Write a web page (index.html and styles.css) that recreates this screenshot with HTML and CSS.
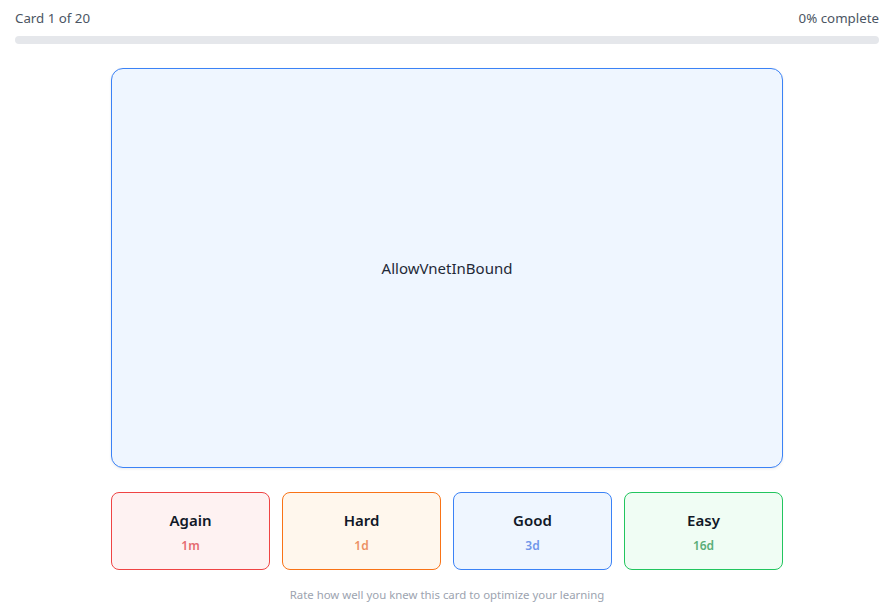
FILE: index.html
```html
<!DOCTYPE html>
<html lang="en">
<head>
    <meta charset="UTF-8">
    <meta name="viewport" content="width=device-width, initial-scale=1.0">
    <title>Flashcards</title>
    <link rel="stylesheet" href="styles.css">
</head>
<body>
    <div class="page">
        <div class="progress-info">
            <span>Card 1 of 20</span>
            <span>0% complete</span>
        </div>
        <div class="progress-track">
            <div class="progress-fill" style="width: 0%"></div>
        </div>

        <div class="card">
            <div class="card-text">AllowVnetInBound</div>
        </div>

        <div class="ratings">
            <button class="rate again">
                <span class="rate-label">Again</span>
                <span class="rate-time">1m</span>
            </button>
            <button class="rate hard">
                <span class="rate-label">Hard</span>
                <span class="rate-time">1d</span>
            </button>
            <button class="rate good">
                <span class="rate-label">Good</span>
                <span class="rate-time">3d</span>
            </button>
            <button class="rate easy">
                <span class="rate-label">Easy</span>
                <span class="rate-time">16d</span>
            </button>
        </div>

        <p class="hint">Rate how well you knew this card to optimize your learning</p>
    </div>
</body>
</html>
```

FILE: styles.css
```css
* {
    margin: 0;
    padding: 0;
    box-sizing: border-box;
}

body {
    font-family: 'Segoe UI', 'Noto Sans', 'Open Sans', sans-serif;
    background: #ffffff;
    color: #111827;
}

.page {
    padding: 8px 11px 0 15px;
}

.progress-info {
    display: flex;
    justify-content: space-between;
    font-size: 13.3px;
    line-height: 20px;
    color: #4b5563;
}

.progress-track {
    margin-top: 8px;
    height: 8px;
    background: #e5e7eb;
    border-radius: 999px;
    overflow: hidden;
}

.progress-fill {
    height: 100%;
    background: #3b82f6;
}

.card {
    max-width: 672px;
    height: 400px;
    margin: 24px auto 0;
    background: #eff6ff;
    border: 1px solid #3b82f6;
    border-radius: 12px;
    box-shadow: 0 1px 3px rgba(0, 0, 0, 0.08);
    display: flex;
    align-items: center;
    justify-content: center;
}

.card-text {
    font-size: 15px;
    color: #1f2937;
}

.ratings {
    max-width: 672px;
    margin: 24px auto 0;
    display: grid;
    grid-template-columns: repeat(4, 1fr);
    gap: 12px;
}

.rate {
    height: 78px;
    border: 1px solid;
    border-radius: 8px;
    font-family: inherit;
    display: flex;
    flex-direction: column;
    align-items: center;
    justify-content: center;
    gap: 6px;
    cursor: pointer;
}

.rate-label {
    font-size: 15px;
    line-height: 24px;
    font-weight: 600;
    color: #111827;
}

.rate-time {
    font-size: 12px;
    line-height: 16px;
    font-weight: 600;
}

.again {
    background: #fef2f2;
    border-color: #ef4444;
}

.again .rate-time {
    color: #e56b70;
}

.hard {
    background: #fff7ed;
    border-color: #f97316;
}

.hard .rate-time {
    color: #ec9164;
}

.good {
    background: #eff6ff;
    border-color: #3b82f6;
}

.good .rate-time {
    color: #7096ea;
}

.easy {
    background: #f0fdf4;
    border-color: #22c55e;
}

.easy .rate-time {
    color: #5aae78;
}

.hint {
    margin-top: 17px;
    text-align: center;
    font-size: 11.4px;
    line-height: 16px;
    color: #9ca3af;
}
```
